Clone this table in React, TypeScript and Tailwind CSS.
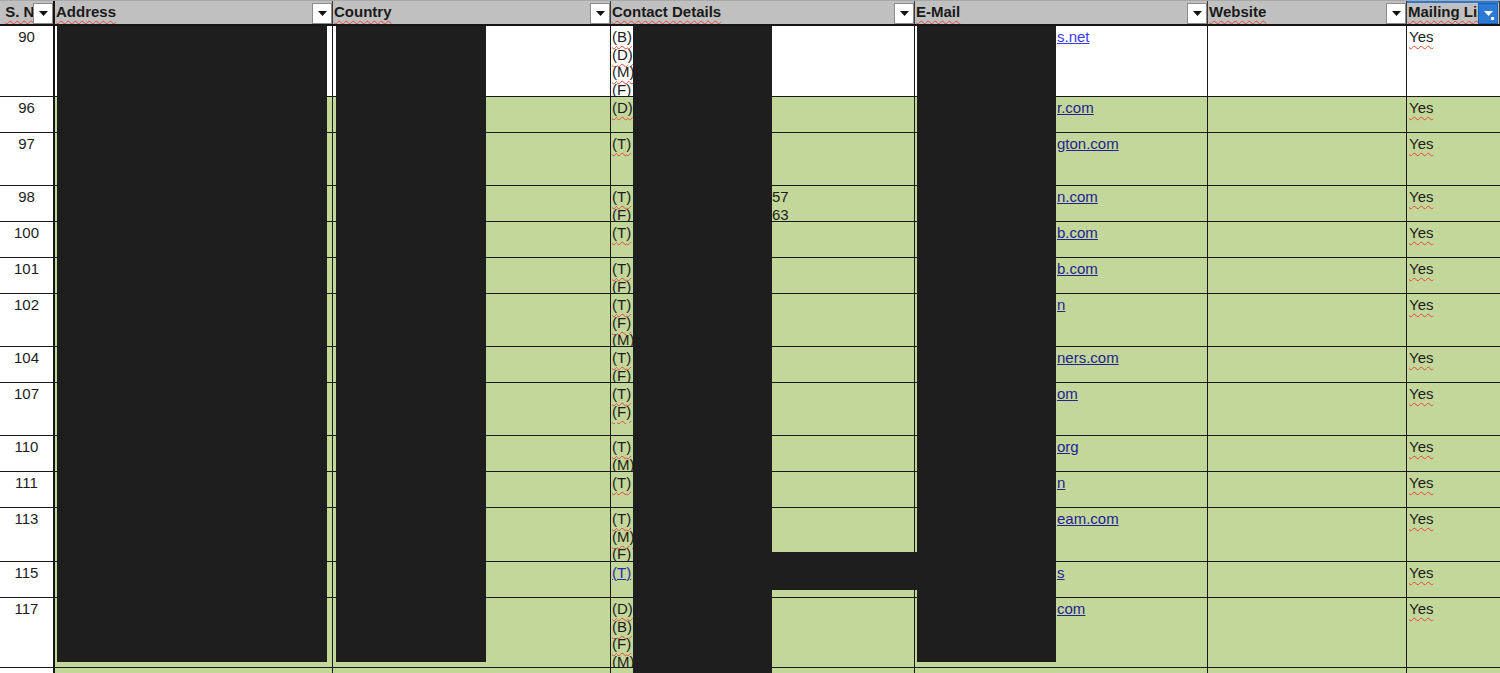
import React from "react"

type Row = {
  n: string
  h: string
  white?: boolean
  contact: string[]
  tails?: string[]
  linkContact?: boolean
  email: string
  bright?: boolean
}

const rows: Row[] = [
  { n: "90", h: "h-[71px]", white: true, contact: ["B", "D", "M", "F"], email: "s.net", bright: true },
  { n: "96", h: "h-[36px]", contact: ["D"], email: "r.com" },
  { n: "97", h: "h-[53px]", contact: ["T"], email: "gton.com" },
  { n: "98", h: "h-[36px]", contact: ["T", "F"], tails: ["57", "63"], email: "n.com" },
  { n: "100", h: "h-[36px]", contact: ["T"], email: "b.com" },
  { n: "101", h: "h-[36px]", contact: ["T", "F"], email: "b.com" },
  { n: "102", h: "h-[53px]", contact: ["T", "F", "M"], email: "n" },
  { n: "104", h: "h-[36px]", contact: ["T", "F"], email: "ners.com" },
  { n: "107", h: "h-[53px]", contact: ["T", "F"], email: "om" },
  { n: "110", h: "h-[36px]", contact: ["T", "M"], email: "org" },
  { n: "111", h: "h-[36px]", contact: ["T"], email: "n" },
  { n: "113", h: "h-[54px]", contact: ["T", "M", "F"], email: "eam.com" },
  { n: "115", h: "h-[36px]", contact: ["T"], linkContact: true, email: "s" },
  { n: "117", h: "h-[70px]", contact: ["D", "B", "F", "M"], email: "com" },
]

const cols = "grid grid-cols-[55px_278px_278px_304px_293px_199px_93px]"
const wavy = "underline decoration-wavy decoration-[#e5483c] decoration-1 underline-offset-[3px]"

function FilterButton({ active }: { active?: boolean }) {
  if (active) {
    return (
      <div className="absolute right-[1px] top-[2px] flex h-[21px] w-[20px] items-center justify-center border border-[#1d5fb0] bg-[#2d7ad6]">
        <svg width="9" height="5" viewBox="0 0 9 5"><polygon points="0,0 9,0 4.5,5" fill="#fff" /></svg>
        <span className="absolute bottom-[3px] right-[3px] h-[3px] w-[3px] bg-white" />
      </div>
    )
  }
  return (
    <div className="absolute right-0 top-[2px] flex h-[21px] w-[20px] items-center justify-center border border-[#8c8c8c] bg-white">
      <svg width="9" height="5" viewBox="0 0 9 5"><polygon points="0,0 9,0 4.5,5" fill="#111" /></svg>
    </div>
  )
}

function HeadCell({ label, first, active }: { label: string; first?: boolean; active?: boolean }) {
  return (
    <div
      className={[
        "relative overflow-hidden whitespace-nowrap text-[15px] font-bold leading-[22px] text-[#1a1a1a]",
        first ? "border-r-2 border-[#141414] text-center" : "border-r border-[#3a3a3a] pl-[1px]",
      ].join(" ")}
    >
      <span className={wavy}>{label}</span>
      {active && <div className="absolute left-0 right-0 top-0 h-[2px] bg-[#2d7ad6]" />}
      <FilterButton active={active} />
    </div>
  )
}

export default function App() {
  return (
    <div className="relative h-[673px] w-[1500px] overflow-hidden bg-white font-['Liberation_Sans',Arial,sans-serif] text-[15px] text-[#1c1c1c]">
      {/* header */}
      <div className={`${cols} h-[26px] border-t border-b-2 border-t-[#a8a8a8] border-b-[#151515] bg-[#c0c0c0]`}>
        <HeadCell label="S. No." first />
        <HeadCell label="Address" />
        <HeadCell label="Country" />
        <HeadCell label="Contact Details" />
        <HeadCell label="E-Mail" />
        <HeadCell label="Website" />
        <HeadCell label="Mailing List" active />
      </div>

      {rows.map((r) => {
        const bg = r.white ? "bg-white" : "bg-[#c4d79b]"
        return (
          <div key={r.n} className={`${cols} ${r.h} border-b border-[#1a1a1a] leading-[17.6px]`}>
            <div className="overflow-hidden border-r-2 border-[#141414] bg-white pt-[2px] text-center">{r.n}</div>
            <div className={`border-r border-[#1a1a1a] ${bg}`} />
            <div className={`border-r border-[#1a1a1a] ${bg}`} />
            <div className={`overflow-hidden border-r border-[#1a1a1a] pl-[1px] pt-[2px] ${bg}`}>
              {r.contact.map((c, i) => (
                <div key={i} className="whitespace-nowrap">
                  <span className={`inline-block w-[160px] ${r.linkContact ? "text-[#2b2bb0] underline" : ""}`}>
                    <span className={r.linkContact ? "" : wavy}>({c})</span>
                  </span>
                  {r.tails ? r.tails[i] : ""}
                </div>
              ))}
            </div>
            <div className={`overflow-hidden border-r border-[#1a1a1a] pl-[142px] pt-[2px] ${bg}`}>
              <span className={r.bright ? "text-[#3b3bf0] underline" : "text-[#23238f] underline"}>{r.email}</span>
            </div>
            <div className={`border-r border-[#1a1a1a] ${bg}`} />
            <div className={`overflow-hidden pl-[2px] pt-[2px] ${bg}`}>
              <span className={wavy}>Yes</span>
            </div>
          </div>
        )
      })}

      {/* partial next row */}
      <div className={`${cols} h-[10px]`}>
        <div className="border-r-2 border-[#141414] bg-white" />
        <div className="border-r border-[#1a1a1a] bg-[#c4d79b]" />
        <div className="border-r border-[#1a1a1a] bg-[#c4d79b]" />
        <div className="border-r border-[#1a1a1a] bg-[#c4d79b]" />
        <div className="border-r border-[#1a1a1a] bg-[#c4d79b]" />
        <div className="border-r border-[#1a1a1a] bg-[#c4d79b]" />
        <div className="bg-[#c4d79b]" />
      </div>

      {/* redaction blocks */}
      <div className="absolute left-[57px] top-[26px] h-[636px] w-[270px] bg-[#1e1e1e]" />
      <div className="absolute left-[336px] top-[26px] h-[636px] w-[150px] bg-[#1e1e1e]" />
      <div className="absolute left-[633px] top-[26px] h-[647px] w-[139px] bg-[#1e1e1e]" />
      <div className="absolute left-[917px] top-[26px] h-[636px] w-[139px] bg-[#1e1e1e]" />
      <div className="absolute left-[772px] top-[552px] h-[38px] w-[145px] bg-[#1e1e1e]" />
    </div>
  )
}
